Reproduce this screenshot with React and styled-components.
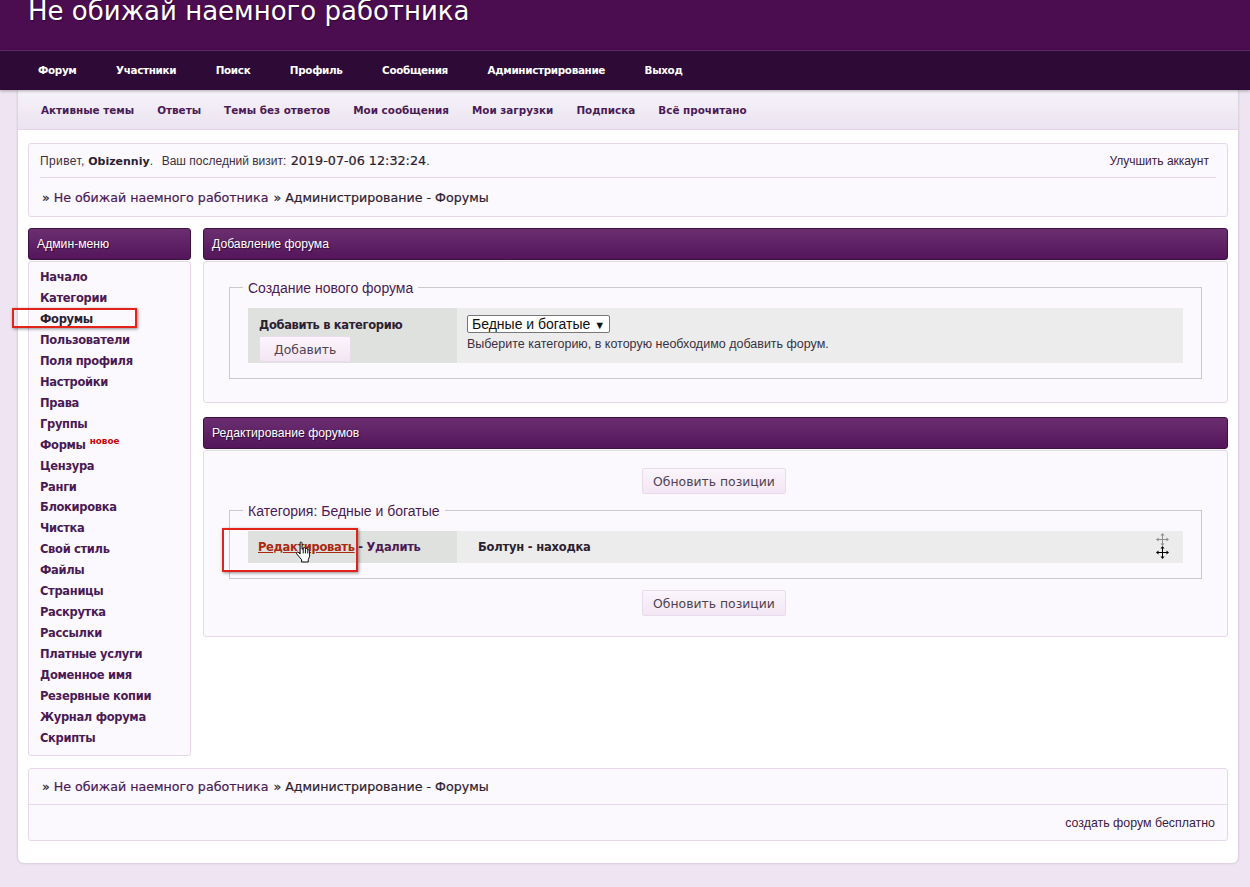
import React from 'react';
import styled, { createGlobalStyle } from 'styled-components';

const GlobalStyle = createGlobalStyle`
  html, body {
    margin: 0;
    padding: 0;
    background: #efe4f1;
    font-family: "DejaVu Sans", sans-serif;
    font-size: 11px;
    color: #2b2130;
  }
`;

const mainLinks = ['Форум', 'Участники', 'Поиск', 'Профиль', 'Сообщения', 'Администрирование', 'Выход'];
const subLinks = ['Активные темы', 'Ответы', 'Темы без ответов', 'Мои сообщения', 'Мои загрузки', 'Подписка', 'Всё прочитано'];
const adminLinks = [
  'Начало', 'Категории', 'Форумы', 'Пользователи', 'Поля профиля', 'Настройки', 'Права', 'Группы', 'Формы',
  'Цензура', 'Ранги', 'Блокировка', 'Чистка', 'Свой стиль', 'Файлы', 'Страницы', 'Раскрутка', 'Рассылки',
  'Платные услуги', 'Доменное имя', 'Резервные копии', 'Журнал форума', 'Скрипты',
];

function MoveIcon({ color }) {
  return (
    <svg width="13" height="13" viewBox="0 0 13 13" fill={color}>
      <path d="M6 2h1v9H6zM2 6h9v1H2z" />
      <path d="M6.5 0 8.5 2.5h-4zM6.5 13l-2-2.500h4zM0 6.500 2.500 4.500v4zM13 6.500l-2.500-2v4z" />
    </svg>
  );
}

function HandCursor() {
  return (
    <svg width="18" height="23" viewBox="0 0 16 24">
      <path
        d="M5 1.500c1 -.8 2 -.3 2 1v6l1.200 -.3v-1c.8 -.8 1.800 -.5 2 .5l.8 .3c.8 -.4 1.600 0 1.700 .9l.8 .3c.9 -.1 1.400 .5 1.400 1.300v5.500l-1.400 3.500v2.400H6.500v-2.400L1.500 13.500c-.8 -1.200 .2 -2.400 1.500 -1.700l2 1.700z"
        fill="#fff"
        stroke="#000"
        strokeWidth="1"
        strokeLinejoin="round"
      />
      <path d="M8.200 8v5M10.500 8.500v4.500M13 9.500v3.500" stroke="#000" strokeWidth="1" fill="none" />
    </svg>
  );
}

export default function App() {
  return (
    <>
      <GlobalStyle />
      <Banner>
        <Title>Не обижай наемного работника</Title>
      </Banner>
      <MainNav>
        {mainLinks.map((link) => (
          <MainLink key={link}>{link}</MainLink>
        ))}
      </MainNav>
      <Wrap>
        <SubNav>
          {subLinks.map((link) => (
            <SubLink key={link}>{link}</SubLink>
          ))}
        </SubNav>
        <Content>
          <InfoBox>
            <InfoTop>
              <Greeting>
                <Hello>Привет,</Hello> <Strong>Obizenniy</Strong>.&nbsp; <LastVisit>Ваш последний визит:</LastVisit>{' '}
                <VisitDate>2019-07-06 12:32:24</VisitDate>.
              </Greeting>
              <Upgrade>Улучшить аккаунт</Upgrade>
            </InfoTop>
            <Crumbs>
              » <CrumbLink>Не обижай наемного работника</CrumbLink> » Администрирование - Форумы
            </Crumbs>
          </InfoBox>

          <Columns>
            <Sidebar>
              <PanelHead>Админ-меню</PanelHead>
              <SideBody>
                {adminLinks.map((link) => (
                  <SideLink key={link} $active={link === 'Форумы'}>
                    {link}
                    {link === 'Форумы' && <RedMark $kind="menu" />}
                    {link === 'Формы' && <NewTag>новое</NewTag>}
                  </SideLink>
                ))}
              </SideBody>
            </Sidebar>

            <MainColumn>
              <Panel>
                <PanelHead>Добавление форума</PanelHead>
                <AddBody>
                  <Group>
                    <GroupTitle>Создание нового форума</GroupTitle>
                    <Row $tall>
                      <LeftCell $tall>
                        <FieldLabel>Добавить в категорию</FieldLabel>
                        <Button $wide>Добавить</Button>
                      </LeftCell>
                      <RightCell>
                        <FakeSelect>
                          Бедные и богатые <Caret>▼</Caret>
                        </FakeSelect>
                        <Hint>Выберите категорию, в которую необходимо добавить форум.</Hint>
                      </RightCell>
                    </Row>
                  </Group>
                </AddBody>
              </Panel>

              <Panel>
                <PanelHead>Редактирование форумов</PanelHead>
                <EditBody>
                  <UpdateButton>Обновить позиции</UpdateButton>
                  <EditGroup>
                    <GroupTitle>Категория: Бедные и богатые</GroupTitle>
                    <Row>
                      <LeftCell>
                        <Actions>
                          <EditLink>Редактировать</EditLink> - Удалить
                          <RedMark $kind="edit" />
                          <Cursor>
                            <HandCursor />
                          </Cursor>
                        </Actions>
                      </LeftCell>
                      <ForumCell>
                        Болтун - находка
                        <MoveIcons>
                          <MoveIcon color="#8d8d8d" />
                          <MoveIcon color="#000" />
                        </MoveIcons>
                      </ForumCell>
                    </Row>
                  </EditGroup>
                  <UpdateButton>Обновить позиции</UpdateButton>
                </EditBody>
              </Panel>
            </MainColumn>
          </Columns>

          <FooterBox>
            <FooterCrumbs>
              » <CrumbLink>Не обижай наемного работника</CrumbLink> » Администрирование - Форумы
            </FooterCrumbs>
            <FooterLine>создать форум бесплатно</FooterLine>
          </FooterBox>
        </Content>
      </Wrap>
    </>
  );
}

const Banner = styled.header`
  height: 50px;
  padding-left: 28px;
  background: #4b0c50;
  overflow: hidden;
`;

const Title = styled.h1`
  margin: 0;
  font-size: 26px;
  line-height: 22px;
  font-weight: 400;
  color: #fff;
  text-shadow: 1px 1px 1px #2e0a36;
`;

const MainNav = styled.nav`
  height: 40px;
  display: flex;
  align-items: center;
  gap: 39.5px;
  padding: 0 0 2px 38px;
  background: #2e0a36;
  border-top: 1px solid #5d2a64;
  box-sizing: border-box;
  position: relative;
  z-index: 1;
  box-shadow: 0 1px 3px rgba(0, 0, 0, 0.3);
`;

const MainLink = styled.a`
  color: #fff;
  font-size: 10.4px;
  letter-spacing: -0.33px;
  font-weight: 700;
`;

const Wrap = styled.div`
  margin: 0 12px 24px 18px;
  height: 773px;
  background: #fff;
  border-radius: 0 0 6px 6px;
  box-shadow: 0 0 3px rgba(0, 0, 0, 0.2);
`;

const SubNav = styled.nav`
  height: 40px;
  box-sizing: border-box;
  display: flex;
  align-items: center;
  gap: 23px;
  padding-left: 23px;
  background: linear-gradient(#f6f3f9, #ebe3f1);
  border-bottom: 1px solid #e2d3e8;
`;

const SubLink = styled.a`
  color: #4a1a55;
  font-size: 10.4px;
  font-weight: 700;
`;

const Content = styled.main`
  padding: 13px 10px 0;
`;

const InfoBox = styled.section`
  height: 74px;
  box-sizing: border-box;
  padding: 0 11px;
  background: #fcf9fe;
  border: 1px solid #e5d8ea;
  border-radius: 3px;
`;

const InfoTop = styled.div`
  height: 33px;
  display: flex;
  align-items: center;
  justify-content: space-between;
  padding-right: 7px;
  border-bottom: 1px solid #e5d8ea;
`;

const Greeting = styled.div`
  font-family: "Liberation Sans", sans-serif;
  font-size: 12px;
  color: #3a3040;
`;

const Hello = styled.span`
  letter-spacing: 0.4px;
`;

const Strong = styled.b`
  font-family: "DejaVu Sans", sans-serif;
  font-size: 11px;
  color: #2b2130;
`;

const LastVisit = styled.span`
  margin-left: 2px;
`;

const VisitDate = styled.span`
  margin-left: 1px;
  font-family: "DejaVu Sans", sans-serif;
  font-size: 12.75px;
  color: #2b2130;
  -webkit-text-stroke: 0.2px #2b2130;
`;

const Upgrade = styled.a`
  font-family: "Liberation Sans", sans-serif;
  font-size: 12px;
  color: #3b1a47;
`;

const Crumbs = styled.div`
  height: 39px;
  display: flex;
  align-items: center;
  gap: 4px;
  padding-left: 2px;
  font-size: 12.65px;
  color: #2b2130;
  -webkit-text-stroke: 0.2px #2b2130;
`;

const CrumbLink = styled.a`
  margin-right: 1px;
  color: #4a1a55;
  -webkit-text-stroke: 0.2px #4a1a55;
`;

const Columns = styled.div`
  display: flex;
  gap: 12px;
  margin-top: 11px;
`;

const Sidebar = styled.aside`
  width: 163px;
`;

const MainColumn = styled.div`
  flex: 1;
  display: flex;
  flex-direction: column;
  gap: 14px;
`;

const Panel = styled.section``;

const PanelHead = styled.h2`
  height: 32px;
  margin: 0 0 1px;
  box-sizing: border-box;
  padding-left: 8px;
  display: flex;
  align-items: center;
  font-family: "Liberation Sans", sans-serif;
  font-size: 12.2px;
  font-weight: 400;
  color: #fff;
  text-shadow: 1px 1px 1px #2e0a36;
  background: linear-gradient(#6b2f70, #54155a);
  border: 1px solid #3f1046;
  border-radius: 3px;
`;

const SideBody = styled.div`
  height: 495px;
  box-sizing: border-box;
  padding: 5px 11px;
  background: #fcf9fe;
  border: 1px solid #e5d8ea;
  border-radius: 3px;
`;

const SideLink = styled.a`
  display: block;
  position: relative;
  height: 20.96px;
  line-height: 21px;
  font-size: 11.5px;
  letter-spacing: -0.33px;
  font-weight: 700;
  color: ${(p) => (p.$active ? '#2b2130' : '#4a1a55')};
`;

const NewTag = styled.sup`
  margin-left: 4px;
  font-size: 8.8px;
  letter-spacing: 0;
  line-height: 0;
  font-weight: 700;
  color: #cc0000;
`;

const RedMark = styled.span`
  position: absolute;
  box-sizing: border-box;
  border: 2px solid #e2231a;
  box-shadow: 1px 1px 3px rgba(0, 0, 0, 0.45);
  ${(p) =>
    p.$kind === 'menu'
      ? 'left: -28px; top: -1px; width: 125px; height: 20px;'
      : 'left: -36px; top: -12px; width: 136px; height: 44px;'}
`;

const AddBody = styled.div`
  height: 142px;
  box-sizing: border-box;
  padding: 17px 25px 0;
  background: #fcf9fe;
  border: 1px solid #e5d8ea;
  border-radius: 3px;
`;

const EditBody = styled.div`
  height: 187px;
  box-sizing: border-box;
  padding: 17px 25px 0;
  display: flex;
  flex-direction: column;
  align-items: center;
  background: #fcf9fe;
  border: 1px solid #e5d8ea;
  border-radius: 3px;
`;

const Group = styled.fieldset`
  align-self: stretch;
  margin: 0;
  padding: 12px 18px 15px;
  border: 1px solid #cdc8d0;
  min-width: 0;
`;

const EditGroup = styled(Group)`
  margin: 8px 0 11px;
`;

const GroupTitle = styled.legend`
  padding: 1px 5px 0;
  margin-left: -5px;
  font-family: "Liberation Sans", sans-serif;
  font-size: 14px;
  line-height: 16px;
  color: #4a1a55;
`;

const Row = styled.div`
  display: flex;
  height: ${(p) => (p.$tall ? '55px' : '32px')};
`;

const LeftCell = styled.div`
  width: 209px;
  box-sizing: border-box;
  padding-left: ${(p) => (p.$tall ? '11px' : '10px')};
  padding-top: ${(p) => (p.$tall ? '10px' : '0')};
  background: #dfe1df;
  display: flex;
  flex-direction: column;
  align-items: flex-start;
  justify-content: ${(p) => (p.$tall ? 'flex-start' : 'center')};
`;

const RightCell = styled.div`
  flex: 1;
  box-sizing: border-box;
  padding: 7px 10px 0;
  background: #ececec;
`;

const ForumCell = styled.div`
  flex: 1;
  position: relative;
  display: flex;
  align-items: center;
  padding-left: 21px;
  background: #ececec;
  font-size: 11.5px;
  letter-spacing: -0.2px;
  font-weight: 700;
  color: #2b2130;
`;

const MoveIcons = styled.div`
  position: absolute;
  right: 14px;
  top: 2px;
  display: flex;
  flex-direction: column;
`;

const FieldLabel = styled.div`
  font-size: 11.5px;
  letter-spacing: -0.33px;
  font-weight: 700;
  color: #2b2130;
  margin-bottom: 4px;
`;

const Button = styled.button`
  height: 26px;
  padding: 0 ${(p) => (p.$wide ? '14px' : '10px')};
  font-family: "DejaVu Sans", sans-serif;
  font-size: 12.4px;
  color: #4d4452;
  background: linear-gradient(#fbf5fc, #f3e6f4);
  border: 1px solid #e8dcec;
  border-radius: 2px;
`;

const UpdateButton = styled(Button)`
  margin-right: 3px;
`;

const FakeSelect = styled.div`
  display: inline-block;
  height: 18px;
  line-height: 16px;
  box-sizing: border-box;
  padding: 0 4px;
  font-family: "Liberation Sans", sans-serif;
  font-size: 14px;
  color: #111;
  background: #fff;
  border: 1px solid #777;
  border-radius: 2px;
`;

const Caret = styled.span`
  font-size: 11px;
`;

const Hint = styled.div`
  margin-top: 4px;
  font-family: "Liberation Sans", sans-serif;
  font-size: 12.5px;
  color: #3a3040;
`;

const Actions = styled.div`
  position: relative;
  font-size: 11.5px;
  letter-spacing: -0.33px;
  font-weight: 700;
  color: #4a1a55;
  white-space: nowrap;
`;

const EditLink = styled.a`
  color: #a92a10;
  text-decoration: underline;
`;

const Cursor = styled.span`
  position: absolute;
  left: 36px;
  top: 1px;
`;

const FooterBox = styled.section`
  margin-top: 12px;
  height: 73px;
  box-sizing: border-box;
  background: #fcf9fe;
  border: 1px solid #e5d8ea;
  border-radius: 3px;
`;

const FooterCrumbs = styled(Crumbs)`
  height: 35px;
  padding-left: 13px;
  border-bottom: 1px solid #e5d8ea;
`;

const FooterLine = styled.div`
  height: 36px;
  display: flex;
  align-items: center;
  justify-content: flex-end;
  padding-right: 12px;
  font-family: "Liberation Sans", sans-serif;
  font-size: 12.4px;
  color: #3b1a47;
`;
